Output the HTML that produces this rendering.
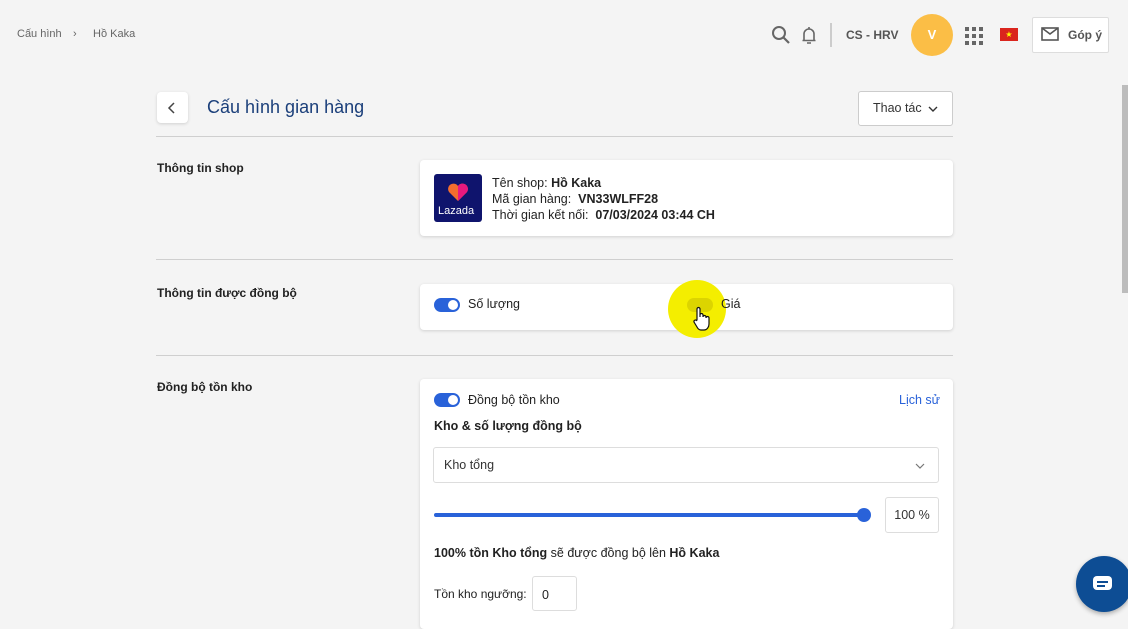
<!DOCTYPE html>
<html><head><meta charset="utf-8"><style>
*{margin:0;padding:0;box-sizing:border-box}
body{width:1128px;height:616px;overflow:hidden;background:#f4f4f4;font-family:"Liberation Sans",sans-serif;color:#222;position:relative;font-size:12.5px}
.a{position:absolute}
.card{position:absolute;background:#fff;border-radius:4px;box-shadow:0 1px 3px rgba(0,0,0,.15)}
.line{position:absolute;left:156px;width:797px;height:1px;background:#cfcfcf}
.lab{position:absolute;left:157px;font-weight:bold;font-size:12px;color:#222}
.tog{position:absolute;width:26px;height:14px;border-radius:7px;background:#2962d9}
.tog::after{content:"";position:absolute;right:2px;top:2px;width:10px;height:10px;border-radius:50%;background:#fff}
</style></head><body>
<div class="a" style="left:17px;top:28px;font-size:11px;color:#666">Cấu hình</div>
<div class="a" style="left:73px;top:28px;font-size:11px;color:#666">›</div>
<div class="a" style="left:93px;top:28px;font-size:11px;color:#666">Hồ Kaka</div>
<svg class="a" style="left:771px;top:25px" width="20" height="20" viewBox="0 0 20 20"><circle cx="8" cy="8" r="6" fill="none" stroke="#666" stroke-width="2"/><path d="M12.5 12.5L18 18" stroke="#666" stroke-width="2.2"/></svg>
<svg class="a" style="left:801px;top:25px" width="16" height="20" viewBox="0 0 16 20"><path d="M3 15V9a5 5 0 0 1 10 0v6M1.5 15.5h13M6 18h4M8 2v2" fill="none" stroke="#666" stroke-width="1.6"/></svg>
<div class="a" style="left:830px;top:23px;width:2px;height:24px;background:#ccc"></div>
<div class="a" style="left:846px;top:28px;font-weight:bold;font-size:12px;color:#555">CS - HRV</div>
<div class="a" style="left:911px;top:14px;width:42px;height:42px;border-radius:50%;background:#fbbe46;color:#fff;font-weight:bold;text-align:center;line-height:42px;font-size:13px">V</div>
<svg class="a" style="left:965px;top:27px" width="18" height="18"><g fill="#666"><rect x="0" y="0" width="4" height="4"/><rect x="7" y="0" width="4" height="4"/><rect x="14" y="0" width="4" height="4"/><rect x="0" y="7" width="4" height="4"/><rect x="7" y="7" width="4" height="4"/><rect x="14" y="7" width="4" height="4"/><rect x="0" y="14" width="4" height="4"/><rect x="7" y="14" width="4" height="4"/><rect x="14" y="14" width="4" height="4"/></g></svg>
<div class="a" style="left:1000px;top:28px;width:18px;height:13px;background:#da251d;color:#ff0;font-size:8px;text-align:center;line-height:13px">★</div>
<div class="a" style="left:1032px;top:17px;width:77px;height:36px;background:#fff;border:1px solid #ddd;border-radius:2px"></div>
<svg class="a" style="left:1041px;top:27px" width="18" height="14"><rect x="1" y="1" width="16" height="12" fill="none" stroke="#555" stroke-width="1.6"/><path d="M1 1l8 6 8-6" fill="none" stroke="#555" stroke-width="1.6"/></svg>
<div class="a" style="left:1068px;top:28px;font-weight:bold;font-size:12px;color:#555">Góp ý</div>
<div class="a" style="left:1122px;top:85px;width:6px;height:208px;background:#bcbcbc"></div>

<div class="card" style="left:157px;top:92px;width:31px;height:31px"></div>
<svg class="a" style="left:167px;top:102px" width="10" height="12"><path d="M7 1L2 6l5 5" fill="none" stroke="#444" stroke-width="1.5"/></svg>
<div class="a" style="left:207px;top:97px;font-size:18px;color:#1b3f7a">Cấu hình gian hàng</div>
<div class="a" style="left:858px;top:91px;width:95px;height:35px;background:#fff;border:1px solid #ccc;border-radius:3px;font-size:12.5px;line-height:33px;padding-left:14px;color:#333">Thao tác</div>
<svg class="a" style="left:928px;top:105px" width="10" height="8"><path d="M1 2l4 4 4-4" fill="none" stroke="#333" stroke-width="1.4"/></svg>
<div class="line" style="top:136px"></div>

<div class="lab" style="top:161px">Thông tin shop</div>
<div class="card" style="left:420px;top:160px;width:533px;height:76px"></div>
<div class="a" style="left:434px;top:174px;width:48px;height:48px;background:#0f146d;border-radius:3px"></div>
<svg class="a" style="left:447px;top:183px" width="22" height="18" viewBox="0 0 22 18"><path d="M11 18L2 9A5 5 0 0 1 11 3A5 5 0 0 1 20 9Z" fill="#f36d2e"/><path d="M11 18L20 9A5 5 0 0 0 11 3Z" fill="#e8187e"/></svg>
<div class="a" style="left:438px;top:205px;color:#fff;font-size:11px">Lazada</div>
<div class="a" style="left:492px;top:175px;font-size:12.5px;line-height:16px;color:#222">Tên shop: <b>Hồ Kaka</b><br>Mã gian hàng: &nbsp;<b>VN33WLFF28</b><br>Thời gian kết nối: &nbsp;<b>07/03/2024 03:44 CH</b></div>
<div class="line" style="top:259px"></div>

<div class="lab" style="top:286px">Thông tin được đồng bộ</div>
<div class="card" style="left:420px;top:284px;width:533px;height:46px"></div>
<div class="tog" style="left:434px;top:298px"></div>
<div class="a" style="left:468px;top:297px">Số lượng</div>
<div class="a" style="left:668px;top:280px;width:58px;height:58px;border-radius:50%;background:#f4ee00"></div>
<div class="a" style="left:687px;top:298px;width:26px;height:14px;border-radius:7px;background:#dcd400"></div>
<svg class="a" style="left:692px;top:306px" width="18" height="26" viewBox="0 0 18 26"><path d="M5 14V3a1.5 1.5 0 0 1 3 0v8V9a1.5 1.5 0 0 1 3 0v2a1.5 1.5 0 0 1 3 0v1a1.5 1.5 0 0 1 3 0v6c0 3-2 6-5 6H9c-2 0-3-1-4-3l-3-5a1.5 1.5 0 0 1 2.5-1.5z" fill="#fff" stroke="#111" stroke-width="1.2"/></svg>
<div class="a" style="left:721px;top:297px">Giá</div>
<div class="line" style="top:355px"></div>

<div class="lab" style="top:380px">Đồng bộ tồn kho</div>
<div class="card" style="left:420px;top:379px;width:533px;height:250px"></div>
<div class="tog" style="left:434px;top:393px"></div>
<div class="a" style="left:468px;top:393px">Đồng bộ tồn kho</div>
<div class="a" style="left:899px;top:393px;color:#2962d9">Lịch sử</div>
<div class="a" style="left:434px;top:419px;font-weight:bold">Kho &amp; số lượng đồng bộ</div>
<div class="a" style="left:433px;top:447px;width:506px;height:36px;border:1px solid #ddd;border-radius:3px;padding:10px 10px;color:#333">Kho tổng</div>
<svg class="a" style="left:915px;top:462px" width="10" height="8"><path d="M1 2l4 4 4-4" fill="none" stroke="#777" stroke-width="1.2"/></svg>
<div class="a" style="left:434px;top:513px;width:430px;height:4px;background:#2962d9;border-radius:2px"></div>
<div class="a" style="left:857px;top:508px;width:14px;height:14px;border-radius:50%;background:#2962d9"></div>
<div class="a" style="left:885px;top:497px;width:54px;height:36px;border:1px solid #ddd;border-radius:3px;text-align:center;line-height:34px;color:#333">100 %</div>
<div class="a" style="left:434px;top:546px"><b>100% tồn Kho tổng</b> sẽ được đồng bộ lên <b>Hồ Kaka</b></div>
<div class="a" style="left:434px;top:587px;font-size:12px">Tồn kho ngưỡng:</div>
<div class="a" style="left:532px;top:576px;width:45px;height:35px;border:1px solid #ddd;border-radius:3px;padding:11px 9px">0</div>

<div class="a" style="left:1076px;top:556px;width:56px;height:56px;border-radius:50%;background:#0d4d94;box-shadow:0 2px 5px rgba(0,0,0,.3)"></div>
<div class="a" style="left:1093px;top:576px;width:19px;height:14px;border-radius:4px;background:#fff"></div>
<div class="a" style="left:1097px;top:581px;width:11px;height:2px;background:#0d4d94"></div>
<div class="a" style="left:1097px;top:585px;width:8px;height:2px;background:#0d4d94"></div>
</body></html>
